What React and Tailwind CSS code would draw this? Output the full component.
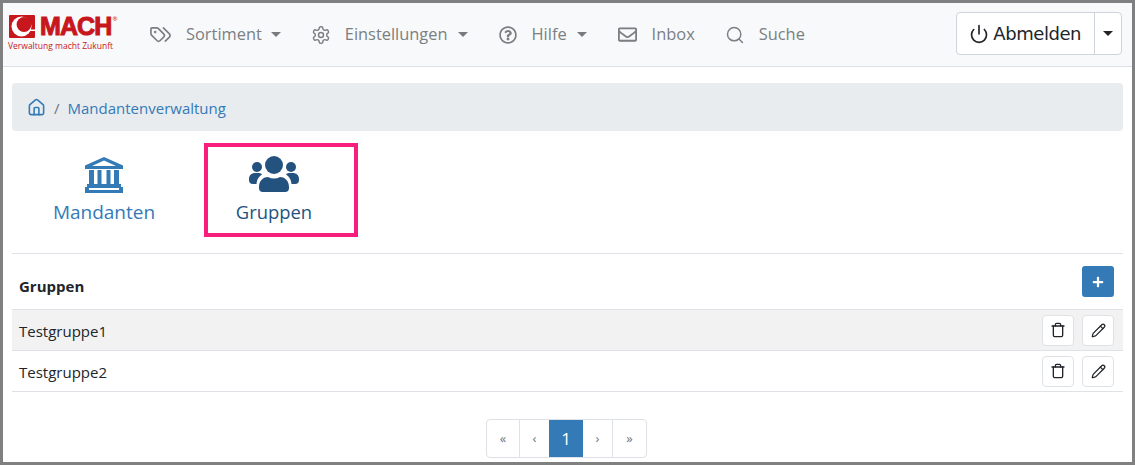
import React from 'react';
import { FaPlus, FaRegEnvelope, FaRegQuestionCircle } from 'react-icons/fa';
import { LuPower, LuTags, LuSettings, LuSearch, LuHouse, LuTrash, LuPencil } from 'react-icons/lu';

const Caret = ({ className = 'border-t-[#777b7f] ml-[-5px]' }) => (
  <span className={`inline-block w-0 h-0 border-x-[5px] border-x-transparent border-t-[5px] ${className}`} />
);

const Logo = () => (
  <div className="flex flex-col w-[112px] mt-[-1px] mb-[2px]">
    <div className="flex items-center h-[24px] pl-[1px]">
      <svg width="26" height="23" viewBox="0 0 26 23">
        <rect width="26" height="23" rx="1" fill="#c8161d" />
        <circle cx="12.500" cy="11.500" r="10" fill="#fff" />
        <circle cx="15" cy="9.500" r="7.400" fill="#c8161d" />
        <path d="M21 14.500h5v1.500h-5Z" fill="#fff" />
      </svg>
      <span className="ml-[5px] text-[25px] leading-none font-bold text-[#c8161d] font-['Liberation_Sans',sans-serif] [-webkit-text-stroke:1px_#c8161d] tracking-[-0.9px]">MACH</span>
      <span className="text-[6px] leading-none text-[#c8161d] self-start ml-[1px] mt-[1px]">®</span>
    </div>
    <span className="text-[8.5px] leading-[12px] mt-[1px] text-[#c8161d] whitespace-nowrap">Verwaltung macht Zukunft</span>
  </div>
);

const NavItem = ({ icon: Icon, label, caret, size = 18, stroke, gap = 'gap-[15px]', className = '', iconClass = '' }) => (
  <div className={`flex items-center ${gap} text-[#7b7f83] ${className}`}>
    <Icon size={size} strokeWidth={stroke} className={iconClass} />
    <span className="text-[16.4px] leading-none">{label}</span>
    {caret && <Caret />}
  </div>
);

const Bank = () => (
  <svg width="40" height="36" viewBox="0 0 40 36" fill="currentColor">
    <path d="M20 0 39 8.500V12H1V8.500ZM20 3.500 8 9H32Z" fillRule="evenodd" />
    <path d="M5 13h5v15H5ZM13.500 13h4v15h-4ZM22.500 13h4v15h-4ZM30 13h5v15h-5Z" />
    <path d="M3 27H37V30H39V36H1V30H3ZM5 31V33H35V31Z" fillRule="evenodd" />
  </svg>
);

const Users = () => (
  <svg width="50" height="36" viewBox="0 0 50 36" fill="currentColor">
    <circle cx="25" cy="9" r="9" />
    <circle cx="8" cy="11" r="5" />
    <circle cx="42" cy="11" r="5" />
    <path d="M10 31C10 24 15 21 19 21Q25 24 31 21C35 21 40 24 40 31V32a4 4 0 0 1-4 4H14a4 4 0 0 1-4-4Z" />
    <path d="M0 23C0 19 3 17 6 17H10C11.500 17 12.500 18 13 18.500C10 20.500 8 23 7.500 28H4a4 4 0 0 1-4-4Z" />
    <path d="M50 23C50 19 47 17 44 17H40C38.500 17 37.500 18 37 18.500C40 20.500 42 23 42.500 28H46a4 4 0 0 0 4-4Z" />
  </svg>
);

const IconButton = ({ children }) => (
  <button className="w-[32px] h-[31px] flex items-center justify-center bg-white border border-[#dee2e6] rounded-[4px] text-[#212529]">
    {children}
  </button>
);

const PageButton = ({ children, active, className = '' }) => (
  <div className={`h-full flex items-center justify-center ${active ? 'bg-[#337ab7] text-white text-[17px]' : 'text-[#6c757d] text-[13px] border-[#dee2e6]'} ${className}`}>
    {children}
  </div>
);

const Row = ({ name, shaded }) => (
  <div className={`flex items-center justify-between h-[41px] pl-[7px] pr-[9px] border-b border-[#dee2e6] ${shaded ? 'bg-[#f2f2f2]' : ''}`}>
    <span className="text-[15px] text-[#212529] pt-[2px]">{name}</span>
    <div className="flex gap-[8px]">
      <IconButton><LuTrash size={16} /></IconButton>
      <IconButton><LuPencil size={15} /></IconButton>
    </div>
  </div>
);

export default function App() {
  return (
    <div className="h-[465px] border-[3px] border-[#808080] bg-white overflow-hidden font-['Open_Sans',sans-serif]">
      <nav className="flex items-center h-[64px] pl-[5px] pr-[10px] bg-[#f8f9fa] border-b border-[#dee2e6]">
        <Logo />
        <div className="flex items-center ml-[29px] gap-[31px]">
          <NavItem icon={LuTags} label="Sortiment" caret size={23} stroke={1.75} gap="gap-[14px]" />
          <NavItem icon={LuSettings} label="Einstellungen" caret size={20} stroke={1.75} iconClass="mx-[-1px]" />
          <NavItem icon={FaRegQuestionCircle} label="Hilfe" caret />
          <NavItem icon={FaRegEnvelope} label="Inbox" size={19} />
          <NavItem icon={LuSearch} label="Suche" size={20} stroke={1.75} className="ml-[-1px]" gap="gap-[14px]" />
        </div>
        <div className="ml-auto mb-[2px] flex h-[43px] bg-white border border-[#ced4da] rounded-[4px] text-[#212529]">
          <div className="flex items-center gap-[4px] pl-[12px] pr-[13px] text-[18px] font-['DejaVu_Sans',sans-serif] tracking-[-0.45px]">
            <LuPower size={20} />
            <span>Abmelden</span>
          </div>
          <div className="flex items-center justify-center w-[27px] border-l border-[#ced4da]">
            <Caret className="border-t-[#212529]" />
          </div>
        </div>
      </nav>

      <main className="px-[9px]">
        <div className="flex items-center h-[48px] mt-[16px] pl-[15px] bg-[#e9ecef] rounded-[4px] text-[#337ab7] text-[15px]">
          <LuHouse size={19} />
          <span className="mx-[8px] text-[#6c757d] pt-[2px]">/</span>
          <span className="pt-[2px]">Mandantenverwaltung</span>
        </div>

        <div className="flex mt-[12px] h-[94px]">
          <div className="flex flex-col items-center w-[184px] pt-[14px] text-[#337ab7]">
            <Bank />
            <span className="text-[19px] leading-[26px] mt-[6px]">Mandanten</span>
          </div>
          <div className="flex flex-col items-center w-[154px] ml-[8px] border-[4px] border-[#f81e7d] text-[#24527f] pt-[9px] pr-[14px]">
            <Users />
            <span className="text-[18.4px] leading-[26px] mt-[7px]">Gruppen</span>
          </div>
        </div>

        <div className="mt-[16px] border-t border-[#dee2e6]">
          <div className="flex items-center justify-between h-[56px] pl-[7px] pr-[9px] border-b border-[#dee2e6]">
            <span className="text-[15px] font-bold text-[#212529] pt-[9px]">Gruppen</span>
            <button className="w-[32px] h-[31px] flex items-center justify-center bg-[#337ab7] rounded-[3px] text-white">
              <FaPlus size={12} />
            </button>
          </div>
          <Row name="Testgruppe1" shaded />
          <Row name="Testgruppe2" />
        </div>

        <div className="flex justify-center mt-[27px] pr-[2px]">
          <div className="flex h-[39px] border border-[#dee2e6] rounded-[4px] overflow-hidden">
            <PageButton className="w-[33px] border-r">«</PageButton>
            <PageButton className="w-[29px]">‹</PageButton>
            <PageButton active className="w-[34px]">1</PageButton>
            <PageButton className="w-[30px] border-r">›</PageButton>
            <PageButton className="w-[33px]">»</PageButton>
          </div>
        </div>
      </main>
    </div>
  );
}
